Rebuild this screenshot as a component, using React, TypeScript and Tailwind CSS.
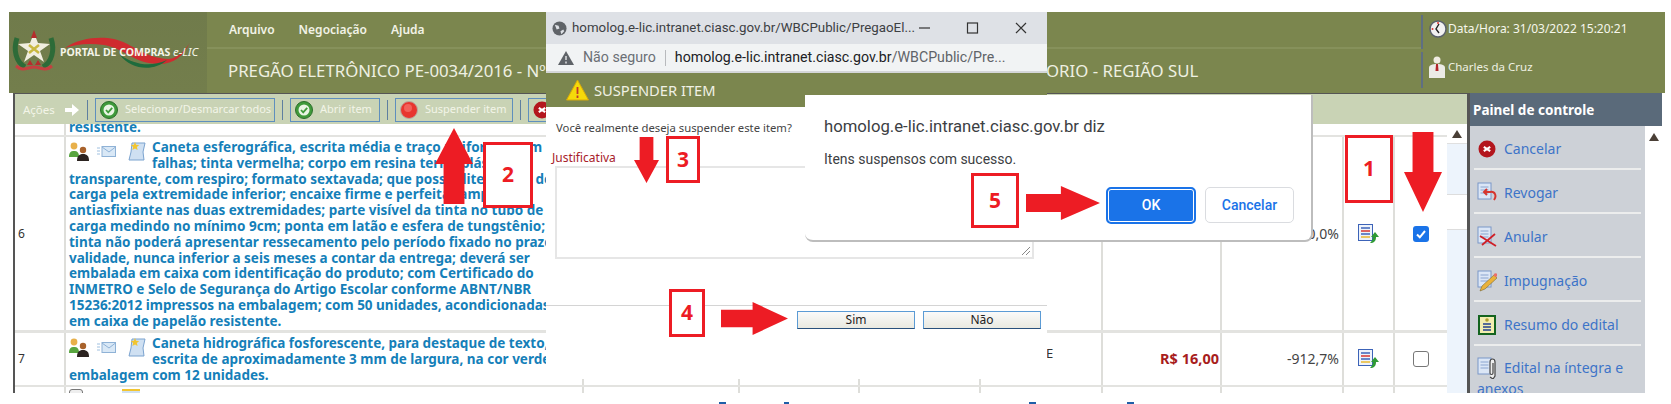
import React from 'react';

const GreenCheck = () => (
  <svg width="18" height="18" viewBox="0 0 18 18" className="shrink-0">
    <circle cx="9" cy="9" r="8.5" fill="#3f9a3a" stroke="#2c6e2c" />
    <circle cx="9" cy="9" r="5.5" fill="#e9f5e4" />
    <path d="M6 9l2.2 2.3L12.2 6.8" fill="none" stroke="#3f9a3a" strokeWidth="1.8" />
  </svg>
);

const RedDot = () => (
  <svg width="18" height="18" viewBox="0 0 18 18" className="shrink-0">
    <circle cx="9" cy="9" r="8.5" fill="#e8352e" stroke="#b9a9a0" />
    <circle cx="8" cy="7" r="4" fill="#f2615a" />
  </svg>
);

const RedX = ({ size = 18 }: { size?: number }) => (
  <svg width={size} height={size} viewBox="0 0 18 18" className="shrink-0">
    <circle cx="9" cy="9" r="8.5" fill="#b3161d" />
    <path d="M5.8 6.8l6.4 4.4M12.2 6.8l-6.4 4.4" stroke="#fff" strokeWidth="2.2" />
  </svg>
);

const People = () => (
  <svg width="20" height="19" viewBox="0 0 20 19" className="shrink-0">
    <circle cx="5" cy="4" r="3.4" fill="#e8b04a" />
    <path d="M0 15c0-5 2-6 5-6s5 1 5 6z" fill="#58a53f" />
    <circle cx="14" cy="8" r="3.2" fill="#a8622c" />
    <path d="M8 19c0-5 2-7 6-7s6 2 6 7z" fill="#2b2320" />
  </svg>
);

const Mail = () => (
  <svg width="19" height="11" viewBox="0 0 19 11" className="shrink-0">
    <path d="M0 2h3M0 5h3M0 8h3" stroke="#9fc0e0" />
    <rect x="5" y="0.5" width="13.5" height="10" fill="#d9e8f6" stroke="#8fb2d6" />
    <path d="M5 1l7 5 6.500-5" fill="none" stroke="#8fb2d6" />
  </svg>
);

const Note = () => (
  <svg width="18" height="19" viewBox="0 0 18 19" className="shrink-0">
    <path d="M4 1h13l-2 9 1 8H1l2-8z" fill="#cfe0f2" stroke="#7ba3cf" />
    <path d="M7 0l1.200 2.800 3 .2-2.300 2 .7 3L7 6.500 4.400 8l.7-3-2.300-2 3-.2z" fill="#f2c530" />
  </svg>
);

const Report = () => (
  <svg width="22" height="20" viewBox="0 0 22 20" className="shrink-0">
    <rect x="0.500" y="0.500" width="14" height="16" fill="#eef3fb" stroke="#3c63b8" />
    <path d="M3 4h9" stroke="#3c63b8" strokeWidth="1.500" />
    <path d="M3 7h9" stroke="#d8352e" strokeWidth="1.500" />
    <path d="M3 10h9" stroke="#3c63b8" strokeWidth="1.500" />
    <path d="M3 13h9" stroke="#e8b830" strokeWidth="1.500" />
    <path d="M12 19c4 0 6-2 6-6h3l-4-5-4 5h2c0 2-1 4-3 6z" fill="#2f9a35" />
  </svg>
);

const Doc = () => (
  <>
    <rect x="1" y="1" width="13" height="16" fill="#dbe6f6" stroke="#7b97c8" />
    <path d="M3.500 5h8M3.500 8h8M3.500 11h8" stroke="#8aa4cf" />
  </>
);

const PanelIcon = ({ name }: { name: string }) => {
  if (name === 'cancelar') return <RedX />;
  if (name === 'resumo')
    return (
      <svg width="18" height="20" viewBox="0 0 18 20" className="shrink-0">
        <rect x="1" y="1" width="16" height="18" fill="#f3eeb0" stroke="#14641f" strokeWidth="2" />
        <circle cx="9" cy="5" r="1.800" fill="#b0a030" />
        <path d="M5 9h8M5 12h8M5 15h8" stroke="#24408f" strokeWidth="1.500" />
      </svg>
    );
  return (
    <svg width="20" height="22" viewBox="0 0 20 22" className="shrink-0">
      <Doc />
      {name === 'revogar' && <path d="M17 18c3-4 1-9-4-8H7m3-3l-3 3 3 3" fill="none" stroke="#d6352e" strokeWidth="2" />}
      {name === 'anular' && <path d="M3 10l16 10M18 8L5 19" stroke="#cf2028" strokeWidth="1.800" />}
      {name === 'impugnacao' && (
        <>
          <path d="M17 5l3 3L8 19l-5 2 2-5z" fill="#eab23a" stroke="#6d5a22" strokeWidth="0.500" />
          <circle cx="18.500" cy="5" r="1.800" fill="#ea6f6a" />
        </>
      )}
      {name === 'edital' && <path d="M13 20l3 2 2-3V5c0-4-5-4-5 0v11c0 2 3 2 3 0V6" fill="#eee" stroke="#444" strokeWidth="1.200" />}
    </svg>
  );
};

// cabeçalho: brasão + faixa do portal
const Logo = () => (
  <div className="relative w-[198px] shrink-0 bg-gradient-to-b from-[#707b4b] to-[#737e4c]">
    <svg width="198" height="81" viewBox="0 0 198 81" className="absolute inset-0">
      <path d="M8 26c-4 12-1 24 8 29M42 26c4 12 1 24-8 29" fill="none" stroke="#2d6b38" strokeWidth="5" />
      <path d="M7 54c7 6 12 1 18 1s11 5 18-1" fill="none" stroke="#c54040" strokeWidth="3" />
      <path d="M25 21L29 31 41 32 31 39 35 50 25 43 15 50 19 39 9 32 21 31z" fill="#f1eee0" />
      <path d="M25 18l3 8h-6z" fill="#b52d2d" />
      <path d="M20 33l10 8M30 33l-10 8" stroke="#c9b840" strokeWidth="2.500" />
      <path d="M21 48l-3 5h6zM29 48l-3 5h6z" fill="#b52d2d" />
      <path d="M56 36C70 26 90 24 105 27C125 32 135 46 160 47C170 46 178 36 181 30C175 44 165 52 150 52C125 52 115 36 95 33C80 31 68 32 56 36z" fill="#cf2b2f" />
      <path d="M111 43C125 52 140 56 158 48C145 60 122 58 111 43z" fill="#1d6b3c" />
    </svg>
    <span className="absolute left-[51px] top-[33px] font-['Noto_Sans',sans-serif] text-[10.500px] font-bold text-[#f4f4e8] whitespace-nowrap">
      PORTAL DE COMPRAS
    </span>
    <span className="absolute left-[164px] top-[31px] font-['Noto_Sans',sans-serif] text-[11.500px] italic text-[#f4f4e8] whitespace-nowrap">
      e-LIC
    </span>
  </div>
);

const Toolbtn = ({ w, icon, label }: { w: string; icon: React.ReactNode; label: string }) => (
  <div className={`${w} h-[24px] shrink-0 border border-[#5f8fbd] flex items-center gap-[7px] pl-[4px] text-[11px] text-[#f3f5e8] whitespace-nowrap overflow-hidden`}>
    {icon}
    <span>{label}</span>
  </div>
);

const Sep = () => <div className="w-[1px] h-[20px] bg-[#5f7fa0] shrink-0" />;

const Cell = ({ w, children, className = '' }: { w: string; children?: React.ReactNode; className?: string }) => (
  <div className={`${w} shrink-0 border-r-2 border-[#dededa] flex items-center ${className}`}>{children}</div>
);

const NumberCols = ({ preco, pct, checked, e }: { preco?: string; pct: string; checked: boolean; e?: boolean }) => (
  <>
    <Cell w="w-[156px]" />
    <Cell w="w-[120px]" />
    <Cell w="w-[121px]" />
    <Cell w="w-[122px]" className="pl-[65px] pb-[10px]">{e && <span className="text-[#333]">E</span>}</Cell>
    <Cell w="w-[119px]" className="justify-end pr-[1px]">
      {preco && <span className="font-bold text-[14.500px] text-[#a81d1d]">{preco}</span>}
    </Cell>
    <Cell w="w-[122px]" className="justify-end pr-[3px]">
      <span className="text-[#444] text-[14px]">{pct}</span>
    </Cell>
    <Cell w="w-[51px]" className="justify-center">
      <Report />
    </Cell>
    <div className="w-[52px] shrink-0 flex items-center justify-center">
      {checked ? (
        <div className="w-[16px] h-[16px] rounded-[3px] bg-[#1a73e8] flex items-center justify-center">
          <svg width="12" height="12" viewBox="0 0 12 12">
            <path d="M2 6.500l2.800 2.800L10 3" fill="none" stroke="#fff" strokeWidth="2" />
          </svg>
        </div>
      ) : (
        <div className="w-[16px] h-[16px] rounded-[3px] border border-[#777] bg-white" />
      )}
    </div>
  </>
);

const ItemIcons = () => (
  <div className="float-left w-[83px] h-[28px] flex items-start gap-[8px] pt-[2px]">
    <People />
    <div className="pt-[4px]">
      <Mail />
    </div>
    <div className="pl-[4px]">
      <Note />
    </div>
  </div>
);

const panelItems = [
  { id: 'cancelar', label: 'Cancelar' },
  { id: 'revogar', label: 'Revogar' },
  { id: 'anular', label: 'Anular' },
  { id: 'impugnacao', label: 'Impugnação' },
  { id: 'resumo', label: 'Resumo do edital' },
];

// setas vermelhas da anotação
const ArrowV = ({ up, className }: { up?: boolean; className: string }) => (
  <svg viewBox="0 0 40 80" preserveAspectRatio="none" className={`absolute ${className}`}>
    <path d={up ? 'M20 0L40 38H31V80H9V38H0z' : 'M9 0H31V40H40L20 80 0 40H9z'} fill="#ed1c24" />
  </svg>
);

const ArrowR = ({ className }: { className: string }) => (
  <svg viewBox="0 0 70 34" preserveAspectRatio="none" className={`absolute ${className}`}>
    <path d="M0 8H33V0L70 17 33 34V26H0z" fill="#ed1c24" />
  </svg>
);

const Mark = ({ n, className }: { n: string; className: string }) => (
  <div className={`absolute border-[3px] border-[#ed1c24] bg-white flex items-center justify-center font-['Open_Sans',sans-serif] font-bold text-[21px] text-[#ed1c24] ${className}`}>
    {n}
  </div>
);

export default function App() {
  return (
    <div className="relative w-[1671px] h-[404px] overflow-hidden bg-white pl-[9px] pt-[12px] font-['Noto_Sans',sans-serif] text-[13px]">
      <div className="w-[1656px] h-[381px] flex flex-col overflow-hidden">
        {/* cabeçalho */}
        <header className="h-[81px] shrink-0 flex bg-[#7b864e]">
          <Logo />
          <div className="w-[1214px] shrink-0 flex flex-col">
            <nav className="h-[37px] border-b-2 border-[#86915b] flex items-center gap-[24px] pl-[22px] text-[12px] font-semibold text-[#f2f3e6]">
              <span>Arquivo</span>
              <span>Negociação</span>
              <span>Ajuda</span>
            </nav>
            <div className="flex-1 flex items-center pl-[21px] text-[16.800px] text-[#eef0e2] whitespace-nowrap">
              <span className="w-[818px] shrink-0 overflow-hidden">PREGÃO ELETRÔNICO PE-0034/2016 - Nº 0034</span>
              <span>ORIO - REGIÃO SUL</span>
            </div>
          </div>
          <div className="flex-1 flex flex-col text-[#f2f3e6] text-[12px]">
            <div className="h-[34px] border-l-2 border-[#5f6f82] mt-[3px] pb-[6px] flex items-center gap-[1px] pl-[6px]">
              <svg width="18" height="18" viewBox="0 0 18 18" className="shrink-0">
                <circle cx="9" cy="9" r="8" fill="#f1f1f1" stroke="#59606b" strokeWidth="1.500" />
                <path d="M10 4L7 9l3 4" fill="none" stroke="#222" strokeWidth="1.400" />
                <circle cx="3.500" cy="9" r="1" fill="#d33" />
                <circle cx="9" cy="3" r="1" fill="#d33" />
              </svg>
              <span className="text-[#f6f7ec]">Data/Hora: 31/03/2022 15:20:21</span>
            </div>
            <div className="h-[36px] border-l-2 border-[#5f6f82] mt-[3px] pb-[6px] flex items-center gap-[3px] pl-[6px]">
              <svg width="16" height="22" viewBox="0 0 16 22" className="shrink-0">
                <circle cx="8" cy="4" r="3.500" fill="#f0ece2" />
                <path d="M0 22V12c0-3 3-4 8-4s8 1 8 4v10z" fill="#ecebe6" />
                <path d="M7 8h2l.5 7H6.500z" fill="#b3252a" />
              </svg>
              <span className="text-[#eef0e2] text-[11.500px]">Charles da Cruz</span>
            </div>
          </div>
        </header>

        <div className="flex-1 min-h-0 flex pl-[4px]">
          <div className="w-[1454px] shrink-0 flex flex-col border-l-2 border-[#555] border-t border-t-[#555] overflow-hidden">
            {/* barra de ações */}
            <div className="h-[30px] shrink-0 bg-[#c9d3b5] flex items-center pl-[8px] pt-[1px] gap-[7px]">
              <span className="text-[11.500px] text-[#f3f5e8] w-[32px]">Ações</span>
              <svg width="18" height="12" viewBox="0 0 18 12" className="shrink-0">
                <path d="M0 5h1M3 4h7V0l7 6-7 6V8H3z" fill="#fff" />
              </svg>
              <Sep />
              <Toolbtn w="w-[180px]" icon={<GreenCheck />} label="Selecionar/Desmarcar todos" />
              <Sep />
              <Toolbtn w="w-[90px]" icon={<GreenCheck />} label="Abrir item" />
              <Sep />
              <Toolbtn w="w-[118px]" icon={<RedDot />} label="Suspender item" />
              <Sep />
              <Toolbtn w="w-[118px]" icon={<RedX />} label="Cancelar item" />
            </div>
            <div className="flex-1 min-h-0 flex overflow-hidden">
              {/* tabela de itens */}
              <div className="w-[1432px] shrink-0 overflow-hidden font-bold text-[#157fb9] text-[13.500px] leading-[15.800px] whitespace-nowrap">
                <div className="h-[13px] flex border-b-2 border-[#e3e3e0]">
                  <div className="w-[51px] border-r-2 border-[#dededa] shrink-0" />
                  <div className="w-[518px] shrink-0 border-r-2 border-[#dededa] pl-[3px] -mt-[4px]">resistente.</div>
                </div>
                <div className="h-[196px] flex border-b-[3px] border-[#e3e3e0] font-normal">
                  <Cell w="w-[51px]" className="pl-[3px] text-[#333] font-normal text-[12px]">6</Cell>
                  <div className="w-[518px] shrink-0 border-r-2 border-[#dededa] pl-[3px] pt-[3px] overflow-hidden font-bold">
                    <ItemIcons />
                    Caneta esferográfica, escrita média e traço uniforme, sem
                    <br />
                    falhas; tinta vermelha; corpo em resina termoplástica
                    <br />
                    transparente, com respiro; formato sextavada; que possibilite adição de
                    <br />
                    carga pela extremidade inferior; encaixe firme e perfeita tampa
                    <br />
                    antiasfixiante nas duas extremidades; parte visível da tinta no tubo de
                    <br />
                    carga medindo no mínimo 9cm; ponta em latão e esfera de tungstênio;
                    <br />
                    tinta não poderá apresentar ressecamento pelo período fixado no prazo de
                    <br />
                    validade, nunca inferior a seis meses a contar da entrega; deverá ser
                    <br />
                    embalada em caixa com identificação do produto; com Certificado do
                    <br />
                    INMETRO e Selo de Segurança do Artigo Escolar conforme ABNT/NBR
                    <br />
                    15236:2012 impressos na embalagem; com 50 unidades, acondicionadas
                    <br />
                    em caixa de papelão resistente.
                  </div>
                  <div className="flex font-normal text-[13px]">
                    <NumberCols pct="-100,0%" checked />
                  </div>
                </div>
                <div className="h-[54px] flex border-b-2 border-[#e3e3e0]">
                  <Cell w="w-[51px]" className="pl-[3px] text-[#333] font-normal text-[12px]">7</Cell>
                  <div className="w-[518px] shrink-0 border-r-2 border-[#dededa] pl-[3px] pt-[3px] overflow-hidden">
                    <ItemIcons />
                    Caneta hidrográfica fosforescente, para destaque de texto,
                    <br />
                    escrita de aproximadamente 3 mm de largura, na cor verde,
                    <br />
                    embalagem com 12 unidades.
                  </div>
                  <div className="flex font-normal text-[13px]">
                    <NumberCols preco="R$ 16,00" pct="-912,7%" checked={false} e />
                  </div>
                </div>
                {/* linha seguinte, cortada pelo fim da imagem */}
                <div className="h-[20px] flex">
                  <Cell w="w-[51px]" />
                  <div className="w-[518px] shrink-0 border-r-2 border-[#dededa] pl-[3px] pt-[2px] overflow-hidden text-[#0f5f90]">
                    <div className="float-left w-[83px] flex gap-[39px]">
                      <div className="w-[14px] h-[14px] border border-[#777] rounded-t-[3px] bg-[#eee]" />
                      <div className="w-[18px] h-[14px] bg-[#cfe0f2] border-t-2 border-[#f2c530]" />
                    </div>
                    <div className="pt-[3px]">Caneta marca texto, ponta chanfrada, na cor amarela,</div>
                  </div>
                  <Cell w="w-[156px]" />
                  <Cell w="w-[120px]" />
                  <Cell w="w-[121px]" />
                  <Cell w="w-[122px]" />
                  <Cell w="w-[119px]" />
                  <Cell w="w-[122px]" />
                  <Cell w="w-[51px]" />
                </div>
              </div>
              {/* scrollbar da tabela */}
              <div className="flex-1 flex flex-col bg-[#edf4fc]">
                <div className="h-[20px] bg-white flex items-center justify-center border-b border-[#e0e0e0]">
                  <svg width="10" height="8" viewBox="0 0 10 8"><path d="M5 0l5 8H0z" fill="#4a3f36" /></svg>
                </div>
                <div className="h-[36px] bg-white mt-[50px] border-y border-[#ddd]" />
              </div>
            </div>
          </div>

          {/* painel de controle */}
          <aside className="w-[195px] shrink-0 flex flex-col border-l-[3px] border-[#555] overflow-hidden">
            <div className="h-[33px] shrink-0 bg-[#5a6a7a] flex items-center pl-[3px] pt-[2px] text-[13.500px] font-bold text-white">Painel de controle</div>
            <div className="flex-1 flex bg-[#cdd1d7] min-h-0">
              <div className="flex-1 pl-[4px] pr-[4px] text-[14px] text-[#3d74c8]">
                {panelItems.map((it) => (
                  <div key={it.id} className="h-[44px] flex items-center gap-[7px] pl-[3px] pt-[3px] border-b-2 border-[#eceded]">
                    <div className="w-[20px] flex justify-center"><PanelIcon name={it.id} /></div>
                    <span>{it.label}</span>
                  </div>
                ))}
                <div className="pl-[3px] pt-[11px] leading-[20px]">
                  <div className="flex items-center gap-[7px]">
                    <PanelIcon name="edital" />
                    <span>Edital na íntegra e</span>
                  </div>
                  <div>anexos</div>
                </div>
              </div>
              <div className="w-[17px] shrink-0 bg-white">
                <div className="h-[22px] flex items-center justify-center">
                  <svg width="10" height="8" viewBox="0 0 10 8"><path d="M5 0l5 8H0z" fill="#4a3f36" /></svg>
                </div>
              </div>
            </div>
          </aside>
        </div>
      </div>

      {/* janela do navegador: suspender item */}
      <div className="absolute left-[546px] top-[12px] w-[501px] h-[367px] bg-white flex flex-col">
        <div className="h-[32px] shrink-0 bg-[#dee1e6] flex items-center pl-[6px] gap-[5px] text-[#3c4043]">
          <svg width="15" height="15" viewBox="0 0 16 16">
            <circle cx="8" cy="8" r="7.500" fill="#5f6368" />
            <path d="M3 4l4 1 1 3-3 1zM9 11l3-2 1 2-3 3z" fill="#dee1e6" />
          </svg>
          <span className="font-['Roboto',sans-serif] w-[350px] whitespace-nowrap text-[13.300px]">homolog.e-lic.intranet.ciasc.gov.br/WBCPublic/PregaoEl...</span>
          <svg width="118" height="16" viewBox="0 0 118 16" className="-ml-[17px]">
            <path d="M9 8h11" stroke="#333" strokeWidth="1.200" />
            <rect x="57.500" y="3" width="10" height="10" fill="none" stroke="#333" strokeWidth="1.200" />
            <path d="M106 3l10 10M116 3l-10 10" stroke="#333" strokeWidth="1.200" />
          </svg>
        </div>
        <div className="h-[29px] shrink-0 bg-[#f1f3f4] flex items-center pl-[12px] font-['Roboto',sans-serif] text-[14.200px] whitespace-nowrap border-b-2 border-[#d4d6d8]">
          <svg width="16" height="14" viewBox="0 0 16 14"><path d="M8 0l8 14H0z" fill="#5f6368" /><path d="M8 5v4M8 10.500v2" stroke="#f1f3f4" strokeWidth="1.300" /></svg>
          <span className="ml-[9px] text-[#6b6f75]">Não seguro</span>
          <span className="w-[1px] h-[16px] bg-[#b8babd] mx-[9px]" />
          <span className="text-[#202124]">homolog.e-lic.intranet.ciasc.gov.br</span>
          <span className="text-[#5f6368]">/WBCPublic/Pre...</span>
        </div>
        <div className="h-[34px] shrink-0 bg-[#7b864e] flex items-center pl-[20px] gap-[5px] text-[14.700px] text-[#f0f1e4]">
          <svg width="23" height="22" viewBox="0 0 23 22"><path d="M11.500 1L22.500 21H.5z" fill="#f5d90a" stroke="#d8a90a" /><path d="M11.500 8v7M11.500 16.500v2.500" stroke="#c0392b" strokeWidth="1.800" /></svg>
          <span>SUSPENDER ITEM</span>
        </div>
        <div className="flex-1 flex flex-col">
          <div className="pl-[10px] pt-[13px] h-[42px] text-[11.300px] text-[#444]">Você realmente deseja suspender este item?</div>
          <div className="pl-[6px] h-[17px] text-[12px] text-[#a8202a]">Justificativa</div>
          <div className="relative ml-[9px] w-[479px] h-[93px] border-2 border-[#e6e6e6] bg-white">
            <svg width="10" height="10" viewBox="0 0 10 10" className="absolute right-[1px] bottom-[1px]">
              <path d="M1 9l8-8M5 9l4-4" stroke="#888" />
            </svg>
          </div>
          <div className="mt-[46px] h-[1px] bg-[#d4d4d4]" />
          <div className="pl-[251px] pt-[5px] flex gap-[8px] text-[12px] text-[#222]">
            <button className="w-[118px] h-[18px] border border-[#5b9bd5] border-b-[#28507c] bg-gradient-to-b from-[#fafafa] to-[#e9e9e0] flex items-center justify-center">Sim</button>
            <button className="w-[118px] h-[18px] border border-[#5b9bd5] border-b-[#28507c] bg-gradient-to-b from-[#fafafa] to-[#e9e9e0] flex items-center justify-center">Não</button>
          </div>
        </div>
      </div>

      {/* alerta do navegador */}
      <div className="absolute left-[805px] top-[95px] w-[508px] h-[147px] bg-white rounded-b-[8px] border-b-2 border-r-2 border-[#bdbdbd] font-['Roboto',sans-serif] text-[#3c4043]">
        <div className="pl-[19px] pt-[19px] text-[16.700px]">homolog.e-lic.intranet.ciasc.gov.br diz</div>
        <div className="pl-[19px] pt-[10px] text-[14px]">Itens suspensos com sucesso.</div>
        <div className="absolute left-[301px] top-[92px] flex gap-[9px]">
          <div className="w-[90px] h-[37px] rounded-[5px] border-2 border-[#1a73e8] bg-[#1a73e8] outline outline-1 -outline-offset-3 outline-white flex items-center justify-center text-[14px] font-medium text-white">OK</div>
          <div className="w-[89px] h-[36px] rounded-[5px] border border-[#dadce0] bg-white flex items-center justify-center text-[14px] font-medium text-[#1a73e8]">Cancelar</div>
        </div>
      </div>

      {/* anotações em vermelho */}
      <Mark n="1" className="left-[1345px] top-[135px] w-[48px] h-[68px]" />
      <ArrowV className="left-[1404px] top-[132px] w-[38px] h-[80px]" />
      <Mark n="2" className="left-[483px] top-[142px] w-[50px] h-[66px]" />
      <ArrowV up className="left-[435px] top-[128px] w-[38px] h-[76px]" />
      <Mark n="3" className="left-[666px] top-[136px] w-[34px] h-[47px]" />
      <ArrowV className="left-[634px] top-[137px] w-[25px] h-[46px]" />
      <Mark n="4" className="left-[669px] top-[289px] w-[36px] h-[48px]" />
      <ArrowR className="left-[721px] top-[302px] w-[67px] h-[33px]" />
      <Mark n="5" className="left-[971px] top-[173px] w-[48px] h-[55px]" />
      <ArrowR className="left-[1026px] top-[186px] w-[74px] h-[34px]" />

      {/* topo de um texto cortado na borda inferior */}
      <div className="absolute left-[719px] top-[402px] w-[7px] h-[2px] bg-[#1f5fa8]" />
      <div className="absolute left-[784px] top-[402px] w-[5px] h-[2px] bg-[#1f5fa8]" />
      <div className="absolute left-[1029px] top-[402px] w-[7px] h-[2px] bg-[#1f5fa8]" />
      <div className="absolute left-[1127px] top-[402px] w-[7px] h-[2px] bg-[#1f5fa8]" />
    </div>
  );
}
